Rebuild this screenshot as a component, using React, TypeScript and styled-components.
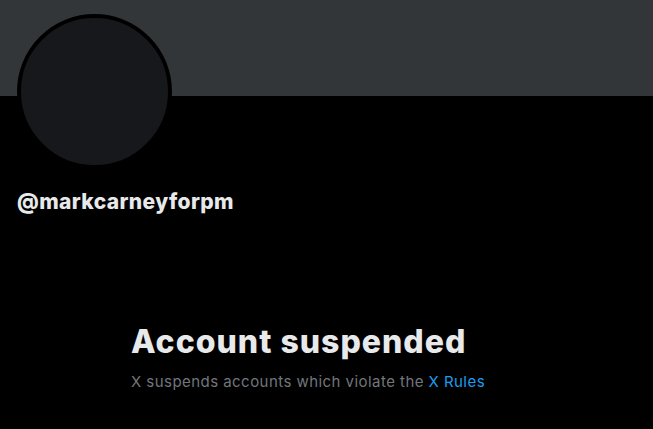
import React from "react";
import styled, { createGlobalStyle } from "styled-components";

const GlobalStyle = createGlobalStyle`
  html, body {
    margin: 0;
    padding: 0;
    background: #000000;
  }
  body {
    font-family: Inter, "Noto Sans", "Liberation Sans", sans-serif;
    color: #e7e9ea;
  }
`;

const Page = styled.main`
  width: 653px;
  height: 429px;
  overflow: hidden;
  background: #000000;
  display: flex;
  flex-direction: column;
`;

const Banner = styled.div`
  height: 96px;
  background: #333639;
  flex-shrink: 0;
`;

const ProfileHeader = styled.section`
  display: flex;
  flex-direction: column;
  align-items: flex-start;
  padding: 0 16px;
`;

const Avatar = styled.div`
  width: 147px;
  height: 147px;
  margin-top: -82px;
  margin-left: 1px;
  border-radius: 50%;
  border: 4px solid #000000;
  background: #16181c;
`;

const Handle = styled.div`
  margin-top: 21px;
  margin-left: 1px;
  font-size: 21px;
  line-height: 24px;
  font-weight: 800;
  letter-spacing: 0.4px;
  color: #e7e9ea;
`;

const EmptyState = styled.section`
  display: flex;
  flex-direction: column;
  align-items: flex-start;
  padding: 110px 0 0 131px;
`;

const Title = styled.h1`
  margin: 0;
  font-size: 32px;
  line-height: 36px;
  font-weight: 800;
  letter-spacing: 1px;
  color: #e7e9ea;
`;

const Subtitle = styled.p`
  margin: 12px 0 0;
  font-size: 15px;
  line-height: 20px;
  font-weight: 400;
  letter-spacing: 0.45px;
  color: #71767b;
`;

const RulesLink = styled.a`
  color: #1d9bf0;
  text-decoration: none;
`;

export default function App() {
  return (
    <>
      <GlobalStyle />
      <Page>
        <Banner />
        <ProfileHeader>
          <Avatar />
          <Handle>@markcarneyforpm</Handle>
        </ProfileHeader>
        <EmptyState>
          <Title>Account suspended</Title>
          <Subtitle>
            X suspends accounts which violate the <RulesLink href="#">X Rules</RulesLink>
          </Subtitle>
        </EmptyState>
      </Page>
    </>
  );
}
